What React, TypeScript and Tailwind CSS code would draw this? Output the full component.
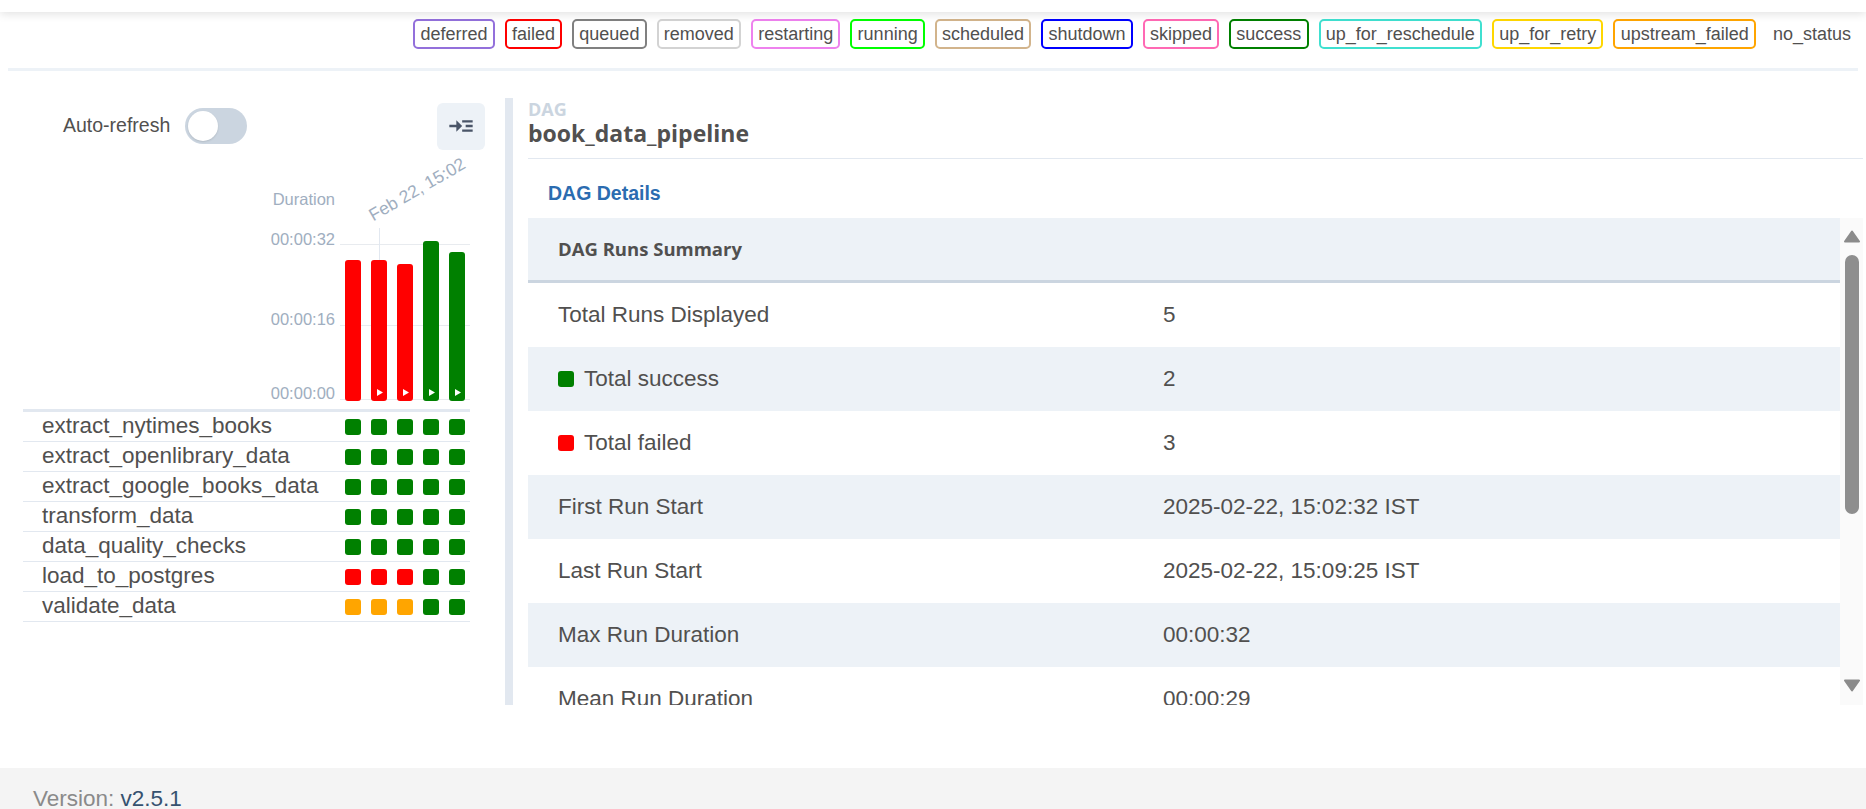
import { MdReadMore } from 'react-icons/md'

const LEGEND: { label: string; cls: string }[] = [
  { label: 'deferred', cls: 'border-[#9370db]' },
  { label: 'failed', cls: 'border-[#ff0000]' },
  { label: 'queued', cls: 'border-[#808080]' },
  { label: 'removed', cls: 'border-[#d3d3d3]' },
  { label: 'restarting', cls: 'border-[#ee82ee]' },
  { label: 'running', cls: 'border-[#00ff00]' },
  { label: 'scheduled', cls: 'border-[#d2b48c]' },
  { label: 'shutdown', cls: 'border-[#0000ff]' },
  { label: 'skipped', cls: 'border-[#ff69b4]' },
  { label: 'success', cls: 'border-[#008000]' },
  { label: 'up_for_reschedule', cls: 'border-[#40e0d0]' },
  { label: 'up_for_retry', cls: 'border-[#ffd700]' },
  { label: 'upstream_failed', cls: 'border-[#ffa500]' },
]

const STATUS_BG: Record<string, string> = {
  success: 'bg-[#008000]',
  failed: 'bg-[#ff0000]',
  upstream_failed: 'bg-[#ffa500]',
}

// px heights of the duration bars, bottom aligned
const RUNS = [
  { state: 'failed', height: 141, manual: false },
  { state: 'failed', height: 141, manual: true },
  { state: 'failed', height: 137, manual: true },
  { state: 'success', height: 160, manual: true },
  { state: 'success', height: 149, manual: true },
]

const S = 'success'
const F = 'failed'
const U = 'upstream_failed'

const TASKS: { name: string; states: string[] }[] = [
  { name: 'extract_nytimes_books', states: [S, S, S, S, S] },
  { name: 'extract_openlibrary_data', states: [S, S, S, S, S] },
  { name: 'extract_google_books_data', states: [S, S, S, S, S] },
  { name: 'transform_data', states: [S, S, S, S, S] },
  { name: 'data_quality_checks', states: [S, S, S, S, S] },
  { name: 'load_to_postgres', states: [F, F, F, S, S] },
  { name: 'validate_data', states: [U, U, U, S, S] },
]

const SUMMARY: { label: string; value: string; dot?: string }[] = [
  { label: 'Total Runs Displayed', value: '5' },
  { label: 'Total success', value: '2', dot: 'bg-[#008000]' },
  { label: 'Total failed', value: '3', dot: 'bg-[#ff0000]' },
  { label: 'First Run Start', value: '2025-02-22, 15:02:32 IST' },
  { label: 'Last Run Start', value: '2025-02-22, 15:09:25 IST' },
  { label: 'Max Run Duration', value: '00:00:32' },
  { label: 'Mean Run Duration', value: '00:00:29' },
]

function Legend() {
  return (
    <div className="flex justify-end gap-[10px] pt-[7px] pb-[19px]">
      {LEGEND.map((l) => (
        <span
          key={l.label}
          className={`flex h-[30px] items-center rounded-[5px] border-2 px-[5.2px] text-[18px] leading-none ${l.cls}`}
        >
          {l.label}
        </span>
      ))}
      <span className="flex h-[30px] items-center px-[7px] text-[18px] leading-none">no_status</span>
    </div>
  )
}

function DurationChart() {
  return (
    <div className="flex h-[262px] w-[447px] border-b-[3px] border-[#e2e8f0]">
      <div className="flex w-[312px] flex-col items-end text-[16.5px] leading-[20px] text-[#a0aec0]">
        <span className="mt-[39px]">Duration</span>
        <span className="mt-[20px]">00:00:32</span>
        <span className="mt-[60px]">00:00:16</span>
        <span className="mt-[54px]">00:00:00</span>
      </div>
      <div className="relative ml-[5px] h-full w-[130px]">
        <div className="absolute inset-x-0 top-[94px] h-px bg-[#e8ebef]" />
        <div className="absolute inset-x-0 top-[175px] h-px bg-[#e8ebef]" />
        <div className="absolute inset-x-0 top-[249px] h-px bg-[#e8ebef]" />
        <div className="absolute left-[39px] top-[78px] h-[173px] w-px bg-[#e2e8f0]" />
        <span className="absolute left-[35px] top-[57px] origin-bottom-left -rotate-30 whitespace-nowrap text-[17.5px] leading-none text-[#a0aec0]">
          Feb 22, 15:02
        </span>
        <div className="flex h-full items-end gap-[10px] pb-[8px] pl-[5px]">
          {RUNS.map((r, i) => (
            <div
              key={i}
              className={`relative flex w-[16px] flex-col items-center justify-end rounded-[3px] pb-[5px] ${STATUS_BG[r.state]}`}
              style={{ height: r.height }}
            >
              {r.manual && (
                <svg width="6" height="7" viewBox="0 0 6 7" className="ml-px">
                  <polygon points="0,0 6,3.5 0,7" fill="#fff" />
                </svg>
              )}
            </div>
          ))}
        </div>
      </div>
    </div>
  )
}

function TaskRows() {
  return (
    <div className="w-[447px]">
      {TASKS.map((t) => (
        <div key={t.name} className="flex h-[30px] items-center border-b border-[#e2e8f0]">
          <span className="flex-1 pl-[19px] text-[22.5px] leading-none">{t.name}</span>
          <div className="flex gap-[10px] pr-[5px]">
            {t.states.map((s, i) => (
              <span key={i} className={`h-[16px] w-[16px] rounded-[3px] ${STATUS_BG[s]}`} />
            ))}
          </div>
        </div>
      ))}
    </div>
  )
}

function LeftPanel() {
  return (
    <div className="flex w-[505px] flex-shrink-0 flex-col pl-[23px] pr-[20px] pt-[4px]">
      <div className="flex h-[48px] items-center justify-between">
        <div className="ml-[40px] flex items-center gap-[15px]">
          <span className="text-[19.5px]">Auto-refresh</span>
          <div className="h-[36px] w-[62px] rounded-full bg-[#cbd5e0] p-[3px]">
            <div className="h-[30px] w-[30px] rounded-full bg-white shadow-[0_1px_2px_rgba(0,0,0,0.12)]" />
          </div>
        </div>
        <button className="flex h-[47px] w-[48px] items-center justify-center rounded-[6px] bg-[#edf2f7] text-[#4a5568]">
          <MdReadMore size={28} />
        </button>
      </div>
      <DurationChart />
      <TaskRows />
    </div>
  )
}

function Scrollbar() {
  return (
    <div className="flex w-[23px] flex-shrink-0 flex-col items-center bg-[#fafafa] pb-[13px] pt-[12px]">
      <svg width="16" height="13" viewBox="0 0 16 13">
        <path d="M8 1.5 L15 11.5 L1 11.5 Z" fill="#8b8b8b" stroke="#8b8b8b" strokeLinejoin="round" strokeWidth="2" />
      </svg>
      <div className="mt-[12px] h-[259px] w-[14px] rounded-full bg-[#8e8e8e]" />
      <div className="flex-1" />
      <svg width="16" height="13" viewBox="0 0 16 13">
        <path d="M8 11.5 L15 1.5 L1 1.5 Z" fill="#8b8b8b" stroke="#8b8b8b" strokeLinejoin="round" strokeWidth="2" />
      </svg>
    </div>
  )
}

function RightPanel() {
  return (
    <div className="flex min-w-0 flex-1 flex-col pl-[15px] pr-[3px]">
      <div className="h-[61px] border-b border-[#e2e8f0] pt-[2px] font-['Open_Sans',sans-serif]">
        <div className="text-[18px] font-bold leading-[19px] text-[#cbd5e0]">DAG</div>
        <div className="text-[23px] font-bold leading-[28px] text-[#51504f]">book_data_pipeline</div>
      </div>
      <div className="flex h-[59px] items-center pl-[20px] pt-[10px] text-[19.5px] font-bold text-[#2b6cb0]">DAG Details</div>
      <div className="flex min-h-0 flex-1">
        <div className="min-w-0 flex-1 overflow-hidden">
          <div className="flex h-[65px] items-center border-b-[3px] border-[#cbd5e0] bg-[#edf2f7] pl-[30px] font-['Open_Sans',sans-serif] text-[18.5px] font-bold">
            DAG Runs Summary
          </div>
          {SUMMARY.map((r, i) => (
            <div
              key={r.label}
              className={`grid h-[64px] grid-cols-[635px_1fr] items-center text-[22.5px] ${i % 2 === 1 ? 'bg-[#edf2f7]' : 'bg-white'}`}
            >
              <div className="flex items-center gap-[10px] pl-[30px]">
                {r.dot && <span className={`h-[16px] w-[16px] rounded-[3px] ${r.dot}`} />}
                <span>{r.label}</span>
              </div>
              <div>{r.value}</div>
            </div>
          ))}
        </div>
        <Scrollbar />
      </div>
    </div>
  )
}

export default function App() {
  return (
    <div className="h-[809px] overflow-hidden bg-white font-['Liberation_Sans',Arial,sans-serif] text-[#51504f]">
      <div className="relative z-10 h-[12px] bg-white shadow-[0_2px_10px_rgba(0,0,0,0.12)]" />
      <div className="px-[8px]">
        <Legend />
        <div className="h-[3px] bg-[#edf2f7]" />
      </div>
      <div className="mt-[27px] flex h-[607px]">
        <LeftPanel />
        <div className="w-[8px] flex-shrink-0 bg-[#e2e8f0]" />
        <RightPanel />
      </div>
      <div className="mt-[63px] h-[41px] bg-[#f4f4f4] pl-[33px] pt-[14px] text-[22.5px] leading-[33px]">
        <span className="text-[#8a8a8a]">Version: </span>
        <span className="text-[#36526f]">v2.5.1</span>
      </div>
    </div>
  )
}
